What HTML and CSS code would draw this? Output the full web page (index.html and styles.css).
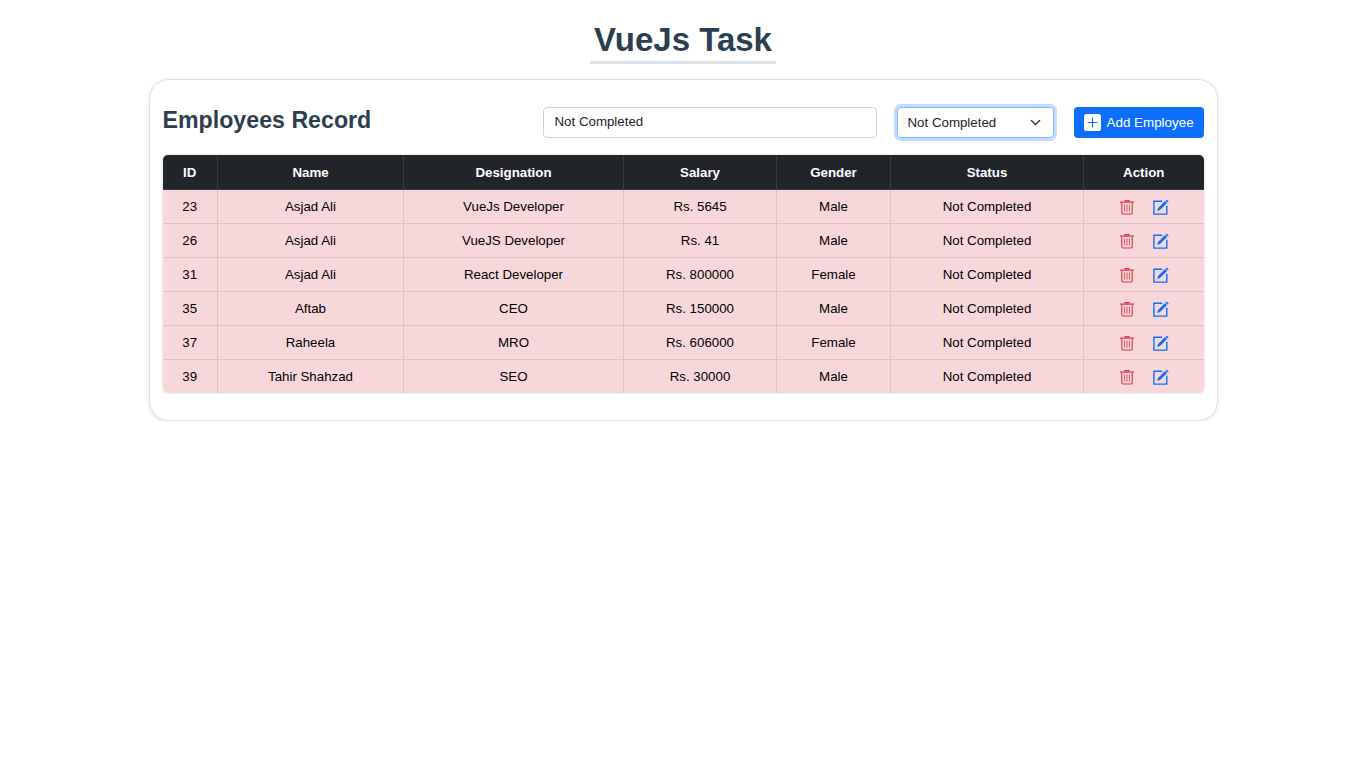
FILE: index.html
```html
<!DOCTYPE html>
<html lang="en">
<head>
<meta charset="utf-8">
<title>VueJs Task</title>
<link rel="stylesheet" href="styles.css">
</head>
<body>
<svg class="defs" width="0" height="0" aria-hidden="true">
  <symbol id="trash" viewBox="0 0 16 16">
    <path fill="none" stroke="currentColor" stroke-width="1.1" d="M2.8 4v9.8c0 .7.5 1.2 1.2 1.2h8c.7 0 1.2-.5 1.2-1.2V4"/>
    <path fill="none" stroke="currentColor" stroke-width="1.2" d="M1 3.2h14"/>
    <path fill="currentColor" d="M5.4 2.6V1.5c0-.4.3-.6.6-.6h4c.3 0 .6.2.6.6v1.1z"/>
    <path fill="none" stroke="currentColor" stroke-width="0.8" d="M5.6 5.6v7M8 5.6v7M10.4 5.6v7"/>
  </symbol>
  <symbol id="edit" viewBox="0 0 16 16">
    <path fill="none" stroke="currentColor" stroke-width="1.4" d="M9.2 2.2H.9v12.9h12.9V6.8"/>
    <path fill="currentColor" d="M13.7.4l2 2-1.1 1.1-2-2zM12 2.1l2 2-7 7-2.9.9.9-2.9z"/>
  </symbol>
</svg>
<main class="page">
  <h1 class="title">VueJs Task</h1>
  <section class="card">
    <header class="toolbar">
      <h2 class="subtitle">Employees Record</h2>
      <input class="search" type="text" value="Not Completed">
      <div class="select">
        <span>Not Completed</span>
        <svg class="chevron" viewBox="0 0 16 16" width="11" height="11"><path fill="none" stroke="#343a40" stroke-width="2" stroke-linecap="round" stroke-linejoin="round" d="M2 5l6 6 6-6"/></svg>
      </div>
      <button class="add" type="button">
        <svg class="plus" viewBox="0 0 16 16" width="17" height="17"><rect width="16" height="16" rx="2.4" fill="#fff"/><path stroke="#0d6efd" stroke-width="1.1" d="M8 3.4v9.2M3.4 8h9.2"/></svg>
        <span>Add Employee</span>
      </button>
    </header>
    <div class="table-wrap">
      <table class="table">
        <colgroup>
          <col class="c-id"><col class="c-name"><col class="c-des"><col class="c-sal"><col class="c-gen"><col class="c-sta"><col class="c-act">
        </colgroup>
        <thead>
          <tr><th>ID</th><th>Name</th><th>Designation</th><th>Salary</th><th>Gender</th><th>Status</th><th>Action</th></tr>
        </thead>
        <tbody>
          <tr><td>23</td><td>Asjad Ali</td><td>VueJs Developer</td><td>Rs. 5645</td><td>Male</td><td>Not Completed</td><td><div class="actions"><svg class="icon del"><use href="#trash"/></svg><svg class="icon upd"><use href="#edit"/></svg></div></td></tr>
          <tr><td>26</td><td>Asjad Ali</td><td>VueJS Developer</td><td>Rs. 41</td><td>Male</td><td>Not Completed</td><td><div class="actions"><svg class="icon del"><use href="#trash"/></svg><svg class="icon upd"><use href="#edit"/></svg></div></td></tr>
          <tr><td>31</td><td>Asjad Ali</td><td>React Developer</td><td>Rs. 800000</td><td>Female</td><td>Not Completed</td><td><div class="actions"><svg class="icon del"><use href="#trash"/></svg><svg class="icon upd"><use href="#edit"/></svg></div></td></tr>
          <tr><td>35</td><td>Aftab</td><td>CEO</td><td>Rs. 150000</td><td>Male</td><td>Not Completed</td><td><div class="actions"><svg class="icon del"><use href="#trash"/></svg><svg class="icon upd"><use href="#edit"/></svg></div></td></tr>
          <tr><td>37</td><td>Raheela</td><td>MRO</td><td>Rs. 606000</td><td>Female</td><td>Not Completed</td><td><div class="actions"><svg class="icon del"><use href="#trash"/></svg><svg class="icon upd"><use href="#edit"/></svg></div></td></tr>
          <tr><td>39</td><td>Tahir Shahzad</td><td>SEO</td><td>Rs. 30000</td><td>Male</td><td>Not Completed</td><td><div class="actions"><svg class="icon del"><use href="#trash"/></svg><svg class="icon upd"><use href="#edit"/></svg></div></td></tr>
        </tbody>
      </table>
    </div>
  </section>
</main>
</body>
</html>
```
FILE: styles.css
```css
* { box-sizing: border-box; }
html, body { margin: 0; padding: 0; background: #fff; }
body { font-family: "Liberation Sans", Arial, sans-serif; font-size: 13.3px; color: #000; }
.defs { position: absolute; }
.page { display: flex; flex-direction: column; align-items: center; padding-top: 18px; }
.title {
  margin: 0 0 15px;
  padding: 0 4px;
  height: 46px;
  line-height: 44px;
  font-size: 33px;
  font-weight: 700;
  color: #2c3e50;
  border-bottom: 3px solid #dee2e6;
}
.card {
  width: 1069px;
  height: 342px;
  padding: 27px 13px 0;
  border: 1px solid #e0e0e0;
  border-radius: 20px;
  box-shadow: 0 1px 4px rgba(0, 0, 0, 0.12);
  background: #fff;
}
.toolbar { display: flex; align-items: flex-start; height: 48px; }
.subtitle {
  margin: 0;
  width: 380px;
  font-size: 23.2px;
  font-weight: 700;
  line-height: 26px;
  color: #2c3e50;
}
.search {
  width: 334px;
  height: 31px;
  padding: 0 11px 2px;
  border: 1px solid #ced4da;
  border-radius: 4px;
  font: 13.3px "Liberation Sans", Arial, sans-serif;
  color: #212529;
  background: #fff;
}
.select {
  display: flex;
  align-items: center;
  justify-content: space-between;
  width: 157px;
  height: 31px;
  margin-left: 20px;
  padding: 0 12px 0 10px;
  border: 1px solid #86b7fe;
  border-radius: 4px;
  box-shadow: 0 0 0 3px rgba(13, 110, 253, 0.25);
  color: #212529;
}
.add {
  display: flex;
  align-items: center;
  gap: 6px;
  width: 130px;
  height: 31px;
  margin-left: 20px;
  padding: 0 0 0 10px;
  border: 0;
  border-radius: 4px;
  background: #0d6efd;
  color: #fff;
  font: 13.4px "Liberation Sans", Arial, sans-serif;
  white-space: nowrap;
}
.table-wrap {
  width: 1041px;
  border-radius: 5px;
  overflow: hidden;
  box-shadow: 0 0 2px rgba(0, 0, 0, 0.25);
}
.table { width: 1041px; border-collapse: collapse; table-layout: fixed; }
.c-id { width: 55px; }
.c-name { width: 186px; }
.c-des { width: 220px; }
.c-sal { width: 153px; }
.c-gen { width: 114px; }
.c-sta { width: 193px; }
.c-act { width: 120px; }
th, td { text-align: center; padding: 0; vertical-align: middle; }
th {
  height: 34px;
  padding-top: 1px;
  background: #212529;
  color: #fff;
  font-weight: 700;
  border-left: 1px solid #373b3e;
  border-bottom: 1px solid #373b3e;
}
td {
  height: 34px;
  background: #f8d7da;
  color: #000;
  border-left: 1px solid #e5bfc3;
  border-bottom: 1px solid #e5bfc3;
}
th:first-child, td:first-child { border-left: 0; }
tbody tr:last-child td { border-bottom: 0; }
.actions { display: flex; justify-content: center; gap: 18px; align-items: center; padding-top: 1px; }
.icon { width: 16px; height: 16px; display: block; }
.del { color: #dc3545; }
.upd { color: #0d6efd; }
```
